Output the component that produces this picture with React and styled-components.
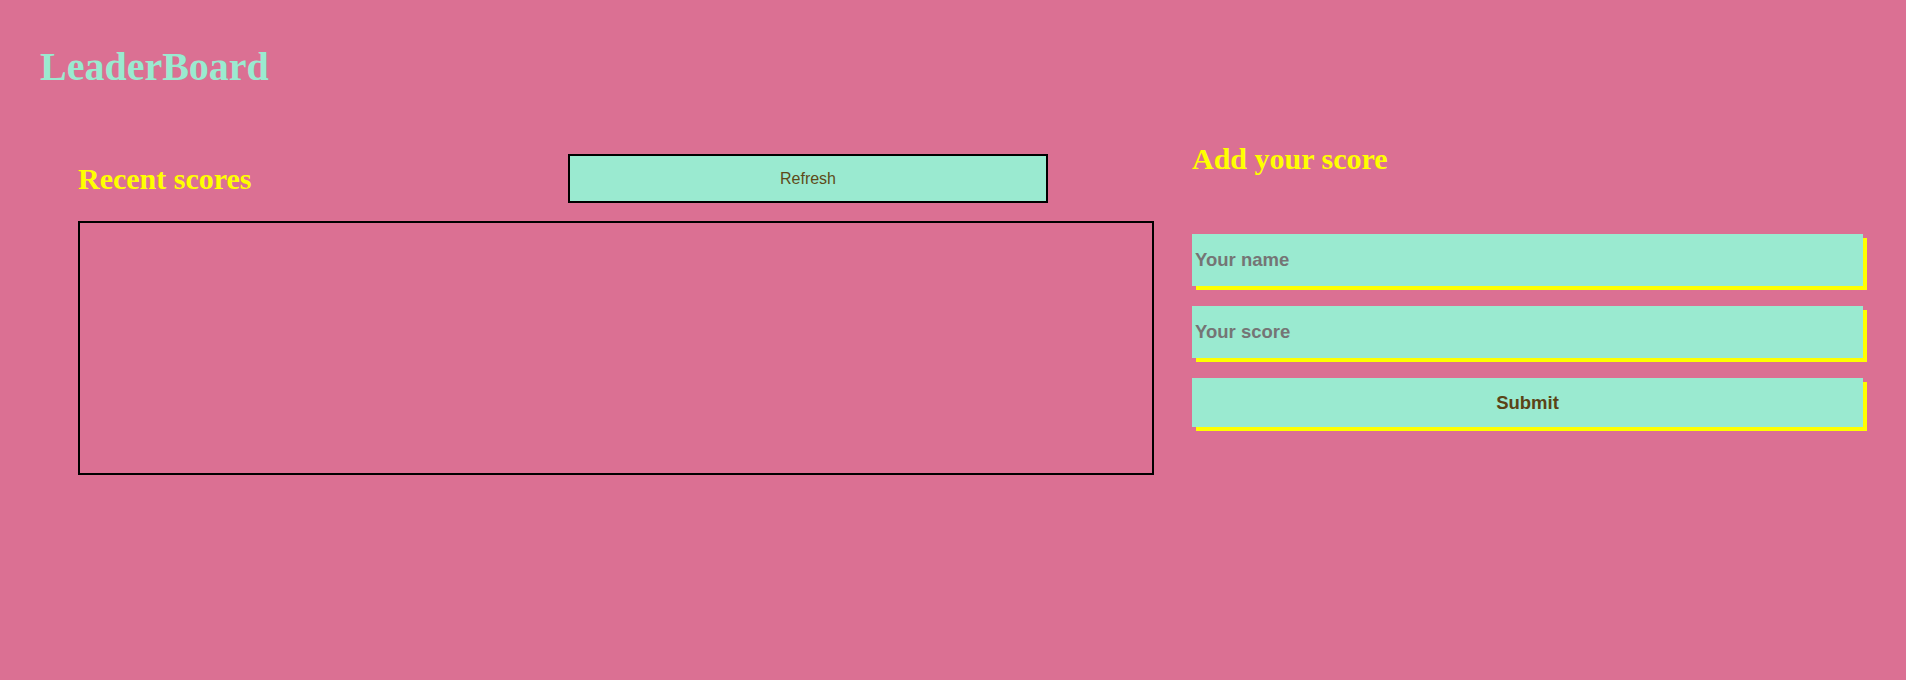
import React, { useState } from "react";
import styled, { createGlobalStyle } from "styled-components";

const GlobalStyle = createGlobalStyle`
    html, body {
        margin: 0;
        padding: 0;
        background-color: palevioletred;
    }

    body {
        min-height: 680px;
        font-family: "Liberation Serif", "Times New Roman", serif;
    }
`;

const Page = styled.div`
    min-height: 680px;
    padding: 44px 43px 0 40px;
    box-sizing: border-box;
    background-color: palevioletred;
`;

const Title = styled.h1`
    margin: 0;
    font-family: "Liberation Serif", "Times New Roman", serif;
    font-size: 40px;
    line-height: 46px;
    font-weight: bold;
    color: #9aead0;
`;

const Main = styled.main`
    display: flex;
    align-items: flex-start;
    gap: 38px;
    margin-top: 52px;
`;

const ScoresColumn = styled.section`
    display: flex;
    flex-direction: column;
    width: 1076px;
    margin-left: 38px;
    padding-top: 12px;
`;

const ScoresHeader = styled.div`
    display: flex;
    align-items: center;
    justify-content: space-between;
    padding-right: 106px;
`;

const Heading = styled.h2`
    margin: 0;
    font-family: "Liberation Serif", "Times New Roman", serif;
    font-size: 30px;
    line-height: 34px;
    font-weight: bold;
    color: yellow;
`;

const RefreshButton = styled.button`
    width: 480px;
    height: 49px;
    border: 2px solid #000;
    background-color: #9aead0;
    color: #5e4a18;
    font-family: "Liberation Sans", Arial, sans-serif;
    font-size: 16px;
    cursor: pointer;
`;

const ScoreBox = styled.ul`
    box-sizing: border-box;
    height: 254px;
    margin: 18px 0 0;
    padding: 0;
    list-style: none;
    border: 2px solid #000;
`;

const FormColumn = styled.section`
    flex: 1;
    display: flex;
    flex-direction: column;
`;

const ScoreForm = styled.form`
    display: flex;
    flex-direction: column;
    gap: 20px;
    margin-top: 58px;
`;

const Field = styled.input`
    box-sizing: border-box;
    width: 100%;
    height: ${(p) => (p.$short ? "49px" : "52px")};
    padding: 0 3px;
    border: none;
    outline: none;
    background-color: #9aead0;
    box-shadow: 4px 4px 0 yellow;
    color: #5b4316;
    font-family: "Liberation Sans", Arial, sans-serif;
    font-size: 18.5px;
    font-weight: bold;

    &::placeholder {
        color: #757575;
    }
`;

const SubmitButton = styled.button`
    box-sizing: border-box;
    width: 100%;
    height: 49px;
    border: none;
    background-color: #9aead0;
    box-shadow: 4px 4px 0 yellow;
    color: #5b4316;
    font-family: "Liberation Sans", Arial, sans-serif;
    font-size: 18.5px;
    font-weight: bold;
    cursor: pointer;
`;

const App = () => {
    const [name, setName] = useState("");
    const [score, setScore] = useState("");

    return (
        <>
            <GlobalStyle />
            <Page>
                <Title>LeaderBoard</Title>
                <Main>
                    <ScoresColumn>
                        <ScoresHeader>
                            <Heading>Recent scores</Heading>
                            <RefreshButton type="button">Refresh</RefreshButton>
                        </ScoresHeader>
                        <ScoreBox />
                    </ScoresColumn>
                    <FormColumn>
                        <Heading>Add your score</Heading>
                        <ScoreForm onSubmit={(e) => e.preventDefault()}>
                            <Field
                                type="text"
                                placeholder="Your name"
                                value={name}
                                onChange={(e) => setName(e.target.value)}
                            />
                            <Field
                                type="text"
                                placeholder="Your score"
                                value={score}
                                onChange={(e) => setScore(e.target.value)}
                            />
                            <SubmitButton type="submit">Submit</SubmitButton>
                        </ScoreForm>
                    </FormColumn>
                </Main>
            </Page>
        </>
    );
};

export default App;
